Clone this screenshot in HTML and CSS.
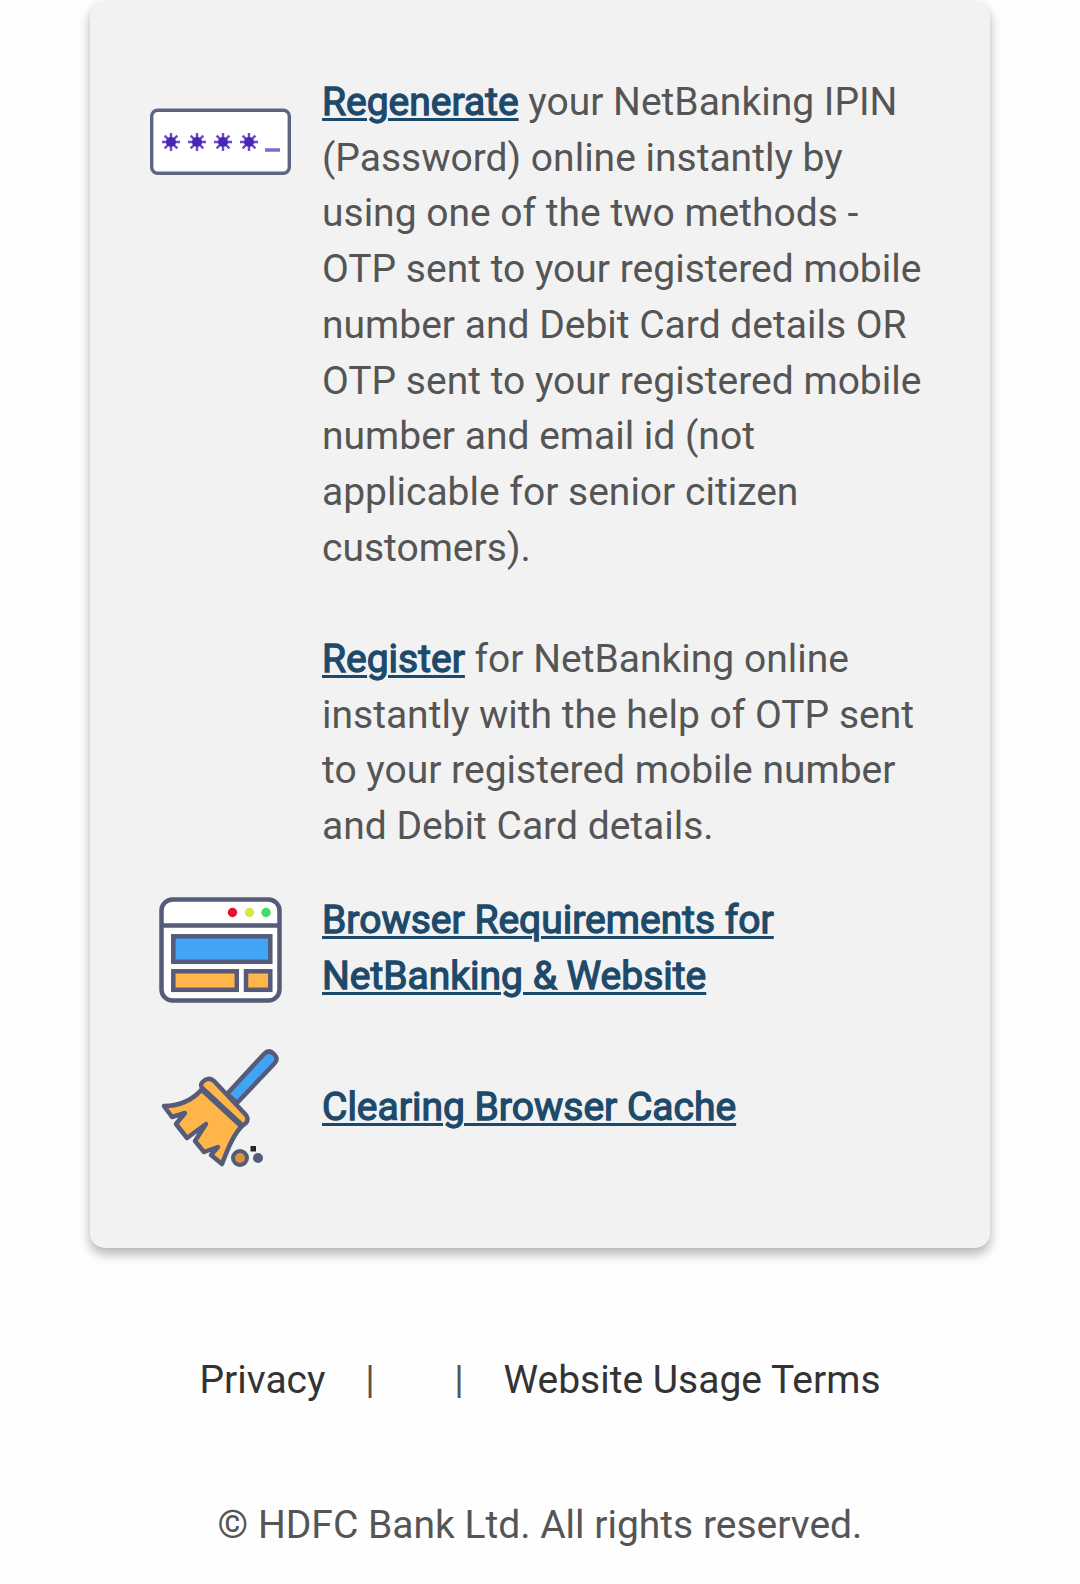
FILE: index.html
```html
<!DOCTYPE html>
<html lang="en">
<head>
<meta charset="utf-8">
<title>NetBanking</title>
<link rel="stylesheet" href="styles.css">
</head>
<body>
<main class="card">
  <section class="row row-password">
    <svg class="icon icon-password" width="141" height="68" viewBox="0 0 141 68">
      <rect x="1.7" y="2.2" width="137.6" height="63" rx="6" fill="#fff" stroke="#5f6482" stroke-width="3.4"/>
      <g stroke="#6a4bc4" stroke-width="2.4">
        <path id="star" d="M21 25v18M12 34h18M14.600 27.600l12.800 12.800M27.400 27.600L14.600 40.400"/>
        <use href="#star" x="26"/>
        <use href="#star" x="52"/>
        <use href="#star" x="78"/>
      </g>
      <g fill="#4a24b4"><circle cx="21" cy="34" r="5"/><circle cx="47" cy="34" r="5"/><circle cx="73" cy="34" r="5"/><circle cx="99" cy="34" r="5"/></g>
      <path d="M115 42h15" stroke="#8268cb" stroke-width="3.500"/>
    </svg>
    <div class="text">
      <p><a class="link" href="#">Regenerate</a> your NetBanking IPIN (Password) online instantly by using one of the two methods - OTP sent to your registered mobile number and Debit Card details OR OTP sent to your registered mobile number and email id (not applicable for senior citizen customers).</p>
      <p><a class="link" href="#">Register</a> for NetBanking online instantly with the help of OTP sent to your registered mobile number and Debit Card details.</p>
    </div>
  </section>
  <section class="row row-browser">
    <svg class="icon icon-browser" width="124" height="108" viewBox="0 0 124 108">
      <rect x="2.500" y="2.500" width="118" height="101" rx="11" fill="#fff" stroke="#555b78" stroke-width="4.500"/>
      <path d="M3 28.500h117" stroke="#555b78" stroke-width="4.500"/>
      <circle cx="73.500" cy="15.500" r="4.700" fill="#e8112d"/>
      <circle cx="90.500" cy="15.500" r="4.700" fill="#dce64b"/>
      <circle cx="107" cy="15.500" r="4.700" fill="#42dc68"/>
      <g stroke="#555b78" stroke-width="4.500">
        <rect x="14.300" y="39.300" width="97" height="25.500" fill="#42a4f5"/>
        <rect x="14.300" y="74.300" width="63.500" height="18.500" fill="#ffb54a"/>
        <rect x="87" y="74.300" width="24.300" height="18.500" fill="#ffb54a"/>
      </g>
    </svg>
    <div class="text"><a class="link" href="#">Browser Requirements for NetBanking &amp; Website</a></div>
  </section>
  <section class="row row-cache">
    <svg class="icon icon-broom" width="120" height="120" viewBox="0 0 120 120">
      <g stroke="#555b78" stroke-width="4.500" stroke-linejoin="round">
        <path d="M66 45L103 5Q108 0 113 5Q118 10 113 15L76 54Z" fill="#42a4f5"/>
        <path d="M42 39C32 51 19 57 3 57L11 68L24 64L15 75L26 89L45 75L34 92L43 103L57 98L50 106L61 115C67 99 73 84 83 75Z" fill="#ffb54a"/>
        <path d="M41 39Q38 35 44 31Q49 28 53 32L85 66Q88 70 85 74Q82 78 78 74Z" fill="#ffb54a"/>
        <path d="M41 40L80 76" fill="none" stroke-width="6"/>
      </g>
      <circle cx="79" cy="109" r="7" fill="#d9943c" stroke="#555b78" stroke-width="4"/>
      <circle cx="97" cy="109" r="5" fill="#555b78"/>
      <path d="M89.500 97h5.500v5.500h-5.500z" fill="#252525"/>
    </svg>
    <div class="text"><a class="link" href="#">Clearing Browser Cache</a></div>
  </section>
</main>
<footer class="footer">
  <nav class="nav">
    <a class="nav-link" href="#">Privacy</a>
    <span class="bar">|</span>
    <span class="bar">|</span>
    <a class="nav-link" href="#">Website Usage Terms</a>
  </nav>
  <p class="copyright">© HDFC Bank Ltd. All rights reserved.</p>
</footer>
</body>
</html>
```
FILE: styles.css
```css
* {
  box-sizing: border-box;
}

body {
  margin: 0;
  padding-top: 1px;
  height: 1584px;
  overflow: hidden;
  background: #fefefe;
  color: #555;
  font: 39px/55.7px Roboto, sans-serif;
}

p {
  margin: 0;
}

.card {
  width: 900px;
  height: 1247px;
  margin: 0 auto;
  padding: 74px 60px 0;
  border-radius: 15px;
  background: #f2f2f2;
  box-shadow: 0 6px 12px rgba(0, 0, 0, 0.3);
}

.row {
  display: grid;
  grid-template-columns: 141px 608px;
  column-gap: 31px;
  align-items: center;
}

.row-password {
  align-items: start;
}

.row-browser {
  margin-top: 38px;
}

.row-cache {
  margin-top: 42px;
}

.icon {
  display: block;
  justify-self: center;
}

.icon-password {
  margin-top: 33px;
}

.icon-browser {
  margin: 4px 0 -1px;
}

.icon-broom {
  margin: 3px 0 1px;
}

.text p + p {
  margin-top: 55.7px;
}

.link {
  color: #1d4a6b;
  -webkit-text-stroke: 1.3px #1d4a6b;
  text-decoration: underline;
  text-decoration-thickness: 3px;
  text-underline-offset: 3px;
}

.nav {
  display: flex;
  justify-content: center;
  margin-top: 105px;
}

.nav-link {
  color: #333;
  text-decoration: none;
}

.bar {
  width: 11px;
  margin-left: 39px;
  text-align: center;
}

.bar + .bar {
  margin-left: 78px;
}

.bar + .nav-link {
  margin-left: 39px;
}

.copyright {
  margin-top: 89px;
  text-align: center;
}
```
